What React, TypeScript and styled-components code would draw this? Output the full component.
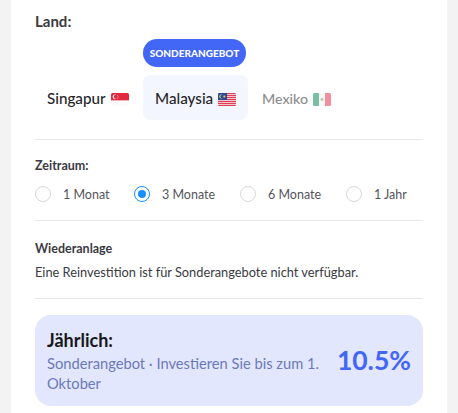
import React from 'react';
import styled, { createGlobalStyle } from 'styled-components';

const GlobalStyle = createGlobalStyle`
  html, body {
    margin: 0;
    height: 100%;
    background: #f3f3f3;
    overflow: hidden;
  }
  body {
    font-family: Lato, "Noto Sans", sans-serif;
    color: #2e2e33;
  }
`;

const SingaporeFlag = () => (
  <svg width="18" height="13" viewBox="0 0 18 13">
    <defs>
      <clipPath id="sg"><rect width="18" height="13" rx="1.5" /></clipPath>
    </defs>
    <g clipPath="url(#sg)">
      <rect width="18" height="7.6" fill="#e2283c" />
      <rect y="7.6" width="18" height="5.4" fill="#fbfafa" />
      <circle cx="4" cy="3.8" r="2.4" fill="#fff" />
      <circle cx="4.9" cy="3.8" r="2.1" fill="#e2283c" />
      <circle cx="6.6" cy="2.8" r=".45" fill="#fff" />
      <circle cx="7.8" cy="3.9" r=".45" fill="#fff" />
      <circle cx="6.6" cy="5" r=".45" fill="#fff" />
    </g>
  </svg>
);

const MalaysiaFlag = () => (
  <svg width="18" height="13" viewBox="0 0 18 13">
    <defs>
      <clipPath id="my"><rect width="18" height="13" rx="1.5" /></clipPath>
    </defs>
    <g clipPath="url(#my)">
      <rect width="18" height="13" fill="#f4c4cc" />
      {[0, 2, 4, 6, 8, 10, 12].map((y) => (
        <rect key={y} y={y} width="18" height="1" fill="#dd3f58" />
      ))}
      <rect width="9" height="7" fill="#2a4a9c" />
      <circle cx="3.4" cy="3.5" r="2.1" fill="#f5d64a" />
      <circle cx="4.1" cy="3.5" r="1.8" fill="#2a4a9c" />
      <circle cx="6.4" cy="3.5" r="1" fill="#f5d64a" />
    </g>
  </svg>
);

const MexicoFlag = () => (
  <svg width="18" height="13" viewBox="0 0 18 13">
    <defs>
      <clipPath id="mx"><rect width="18" height="13" rx="1.5" /></clipPath>
    </defs>
    <g clipPath="url(#mx)" opacity="0.55">
      <rect width="6" height="13" fill="#0a8a5c" />
      <rect x="6" width="6" height="13" fill="#f3f0f0" />
      <rect x="12" width="6" height="13" fill="#e5324e" />
      <circle cx="9" cy="6.5" r="1.4" fill="#9c8a66" />
    </g>
  </svg>
);

const Card = styled.div`
  box-sizing: border-box;
  width: 436px;
  height: 413px;
  margin-left: 11px;
  padding: 12px 24px 0;
  background: #fff;
  overflow: hidden;
`;

const CountryLabel = styled.div`
  font-size: 15px;
  font-weight: 700;
  line-height: 18px;
  color: #3a3a3f;
`;

const Badge = styled.div`
  width: 103px;
  height: 28px;
  margin: 9px 0 8px 108px;
  border-radius: 14px;
  background: #4266f6;
  color: #fff;
  font-size: 10px;
  font-weight: 900;
  line-height: 28px;
  text-align: center;
`;

const Tabs = styled.div`
  display: flex;
  gap: 2px;
`;

const Tab = styled.div<{ $width: number; $active?: boolean; $disabled?: boolean }>`
  box-sizing: border-box;
  display: flex;
  align-items: center;
  gap: 5px;
  width: ${(p) => p.$width}px;
  height: 45px;
  padding: 1px 0 0 12px;
  border-radius: 8px;
  background: ${(p) => (p.$active ? '#f3f6ff' : 'transparent')};
  color: ${(p) => (p.$disabled ? '#8d8d8f' : '#26262b')};
  font-size: ${(p) => (p.$disabled ? '14.2px' : '15.2px')};
  font-weight: 500;
`;

const Flag = styled.span`
  display: flex;
  margin-top: 2px;
`;

const Divider = styled.hr<{ $top: number }>`
  height: 1px;
  margin: ${(p) => p.$top}px 0 0;
  border: 0;
  background: #e8e8e8;
`;

const PeriodLabel = styled.div`
  margin-top: 18px;
  font-size: 12.5px;
  font-weight: 700;
  line-height: 16px;
  color: #3a3a3f;
`;

const PeriodRow = styled.div`
  display: grid;
  grid-template-columns: 99px 106px 106px 1fr;
  margin-top: 11px;
`;

const PeriodOption = styled.label`
  display: flex;
  align-items: center;
  gap: 12px;
  height: 18px;
  color: #55555c;
  font-size: 12.5px;
`;

const Radio = styled.span<{ $checked?: boolean }>`
  box-sizing: border-box;
  display: flex;
  align-items: center;
  justify-content: center;
  width: 16px;
  height: 16px;
  border: 1px solid ${(p) => (p.$checked ? '#1890ff' : '#d9d9d9')};
  border-radius: 50%;

  &::after {
    content: '';
    display: ${(p) => (p.$checked ? 'block' : 'none')};
    width: 8px;
    height: 8px;
    border-radius: 50%;
    background: #1890ff;
  }
`;

const ReinvestTitle = styled.div`
  margin-top: 20px;
  font-size: 12.5px;
  font-weight: 700;
  line-height: 16px;
  color: #3a3a3f;
`;

const ReinvestText = styled.div`
  margin-top: 7px;
  font-size: 12.8px;
  line-height: 16px;
  color: #3a3a3f;
`;

const YieldBox = styled.div`
  box-sizing: border-box;
  display: flex;
  align-items: center;
  justify-content: space-between;
  height: 91px;
  margin-top: 16px;
  padding: 0 12px;
  border-radius: 16px;
  background: #e3e7fd;
`;

const YieldCopy = styled.div`
  width: 285px;
`;

const YieldTitle = styled.div`
  color: #17171c;
  font-size: 18px;
  font-weight: 700;
  line-height: 22px;
`;

const YieldNote = styled.div`
  margin-top: 2px;
  color: #6b7ab8;
  font-size: 14.7px;
  line-height: 20px;
`;

const YieldValue = styled.div`
  margin-bottom: 1px;
  color: #4266f6;
  font-size: 26.5px;
  font-weight: 700;
`;

const periods = ['1 Monat', '3 Monate', '6 Monate', '1 Jahr'];

export default function App() {
  return (
    <>
      <GlobalStyle />
      <Card>
        <CountryLabel>Land:</CountryLabel>
        <Badge>SONDERANGEBOT</Badge>
        <Tabs>
          <Tab $width={106}>
            Singapur <Flag><SingaporeFlag /></Flag>
          </Tab>
          <Tab $width={105} $active>
            Malaysia <Flag><MalaysiaFlag /></Flag>
          </Tab>
          <Tab $width={92} $disabled>
            Mexiko <Flag><MexicoFlag /></Flag>
          </Tab>
        </Tabs>
        <Divider $top={19} />
        <PeriodLabel>Zeitraum:</PeriodLabel>
        <PeriodRow>
          {periods.map((period) => (
            <PeriodOption key={period}>
              <Radio $checked={period === '3 Monate'} />
              {period}
            </PeriodOption>
          ))}
        </PeriodRow>
        <Divider $top={17} />
        <ReinvestTitle>Wiederanlage</ReinvestTitle>
        <ReinvestText>Eine Reinvestition ist für Sonderangebote nicht verfügbar.</ReinvestText>
        <Divider $top={18} />
        <YieldBox>
          <YieldCopy>
            <YieldTitle>Jährlich:</YieldTitle>
            <YieldNote>Sonderangebot · Investieren Sie bis zum 1. Oktober</YieldNote>
          </YieldCopy>
          <YieldValue>10.5%</YieldValue>
        </YieldBox>
      </Card>
    </>
  );
}
